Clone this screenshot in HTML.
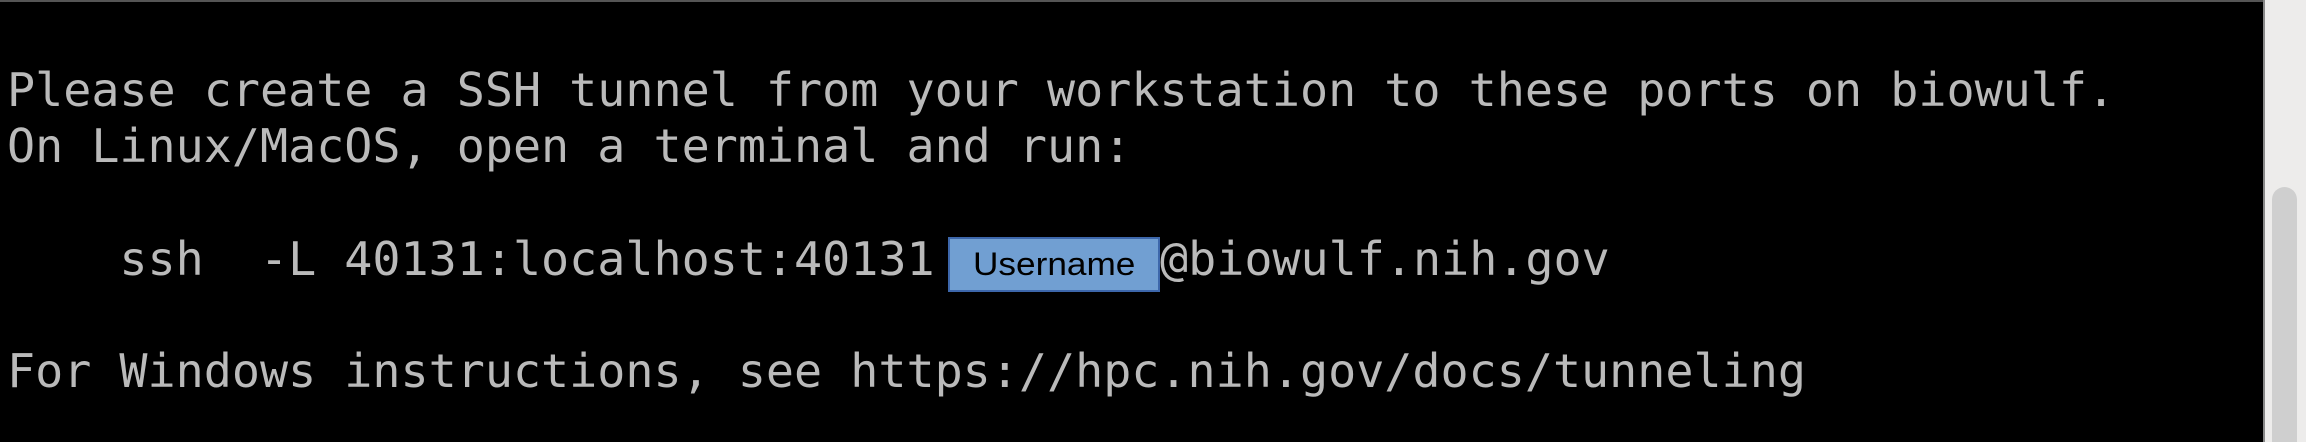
<!DOCTYPE html>
<html><head><style>
html,body{margin:0;padding:0;width:2306px;height:442px;overflow:hidden;}
body{background:#000;position:relative;}
.top{position:absolute;left:0;top:0;width:2263px;height:2px;background:#555;}
.t{position:absolute;left:7px;top:63px;font-family:"DejaVu Sans Mono","Liberation Mono",monospace;font-size:46.7px;line-height:56.3px;color:#bababa;white-space:pre;}
.box{position:absolute;left:948px;top:237px;width:208px;height:51px;background:#719fd2;border:2px solid #3d67ab;box-sizing:content-box;}
.box span{position:absolute;left:23px;top:7px;font-family:"Liberation Sans",Arial,sans-serif;font-size:32px;color:#000;transform:scaleX(1.1);transform-origin:left center;}
.at{position:absolute;left:1160px;top:232px;font-family:"DejaVu Sans Mono","Liberation Mono",monospace;font-size:46.7px;line-height:56.3px;color:#bababa;white-space:pre;}
.sb{position:absolute;left:2263px;top:0;width:43px;height:442px;background:#edeceb;border-left:2px solid #888;box-sizing:border-box;}
.th{position:absolute;left:2272px;top:187px;width:25px;height:255px;background:#cfcfcf;border-radius:13px 13px 0 0;}
</style></head><body>
<div class="top"></div>
<div class="t">Please create a SSH tunnel from your workstation to these ports on biowulf.
On Linux/MacOS, open a terminal and run:

    ssh  -L 40131:localhost:40131

For Windows instructions, see https://hpc.nih.gov/docs/tunneling</div>
<div class="box"><span>Username</span></div>
<div class="at">@biowulf.nih.gov</div>
<div class="sb"></div>
<div class="th"></div>
</body></html>
